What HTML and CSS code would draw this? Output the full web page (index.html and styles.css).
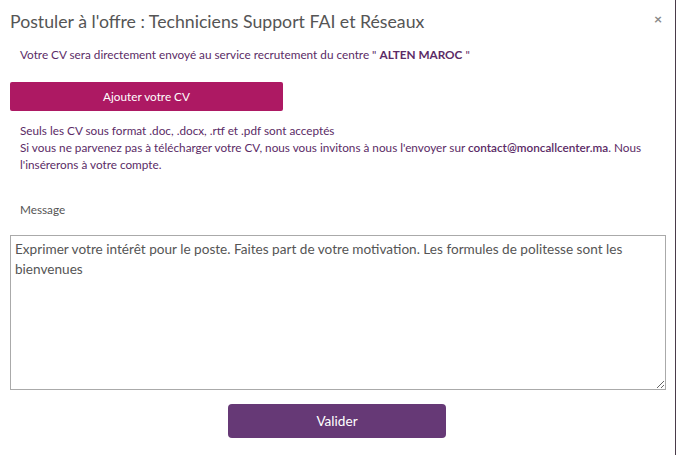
FILE: index.html
```html
<!DOCTYPE html>
<html lang="fr">
<head>
<meta charset="utf-8">
<link rel="stylesheet" href="styles.css">
</head>
<body>
<div class="modal">
  <div class="header">
    <h1 class="title">Postuler à l'offre : Techniciens Support FAI et Réseaux</h1>
    <span class="close">×</span>
  </div>
  <p class="info">Votre CV sera directement envoyé au service recrutement du centre " <b>ALTEN MAROC</b> "</p>
  <button class="btn-cv">Ajouter votre CV</button>
  <p class="notes">Seuls les CV sous format .doc, .docx, .rtf et .pdf sont acceptés<br>Si vous ne parvenez pas à télécharger votre CV, nous vous invitons à nous l'envoyer sur <b>contact@moncallcenter.ma</b>. Nous l'insérerons à votre compte.</p>
  <label class="label">Message</label>
  <textarea class="msg" placeholder="Exprimer votre intérêt pour le poste. Faites part de votre motivation. Les formules de politesse sont les bienvenues"></textarea>
  <div class="actions"><button class="btn-ok">Valider</button></div>
</div>
</body>
</html>
```
FILE: styles.css
```css
html, body { margin: 0; padding: 0; background: #fff; }
body { font-family: Lato, "Open Sans", sans-serif; }
.modal {
  width: 676px;
  height: 455px;
  box-sizing: border-box;
  border-right: 1px solid #4a3b4a;
  padding: 0 10px;
}
.header { display: flex; justify-content: space-between; align-items: flex-start; padding-top: 10px; }
.title { margin: 0; font-size: 17.7px; font-weight: 400; color: #555; line-height: 24px; }
.close { font-size: 14px; font-weight: 700; color: #888; line-height: 14px; margin: 2px 3px 0 0; }
.info { margin: 14px 0 0 10px; font-size: 11.75px; color: #5b2b66; line-height: 14px; }
.info b { font-weight: 700; }
.btn-cv {
  display: block; margin-top: 20px; width: 273px; height: 29px;
  background: #ad1963; color: #fff; border: 0; border-radius: 2px;
  font-family: Lato, sans-serif; font-size: 11.75px; padding: 0;
}
.notes { margin: 11px 0 0 10px; padding-right: 14px; font-size: 11.75px; color: #5b2b66; line-height: 17px; }
.notes b { font-weight: 600; }
.label { display: block; margin: 30px 0 0 10px; font-size: 11.75px; color: #555; line-height: 14px; }
.msg {
  display: block; box-sizing: border-box; margin-top: 18px; width: 656px; height: 155px;
  border: 1px solid #aaa; padding: 3px 4px; resize: both;
  font-family: Lato, sans-serif; font-size: 13.6px; line-height: 20px; color: #555;
}
.msg::placeholder { color: #555; opacity: 1; }
.actions { display: flex; padding-left: 218px; margin-top: 14px; }
.btn-ok {
  width: 218px; height: 34px; background: #663976; color: #fff; border: 0; border-radius: 4px;
  font-family: Lato, sans-serif; font-size: 13.6px; padding: 0;
}
```
